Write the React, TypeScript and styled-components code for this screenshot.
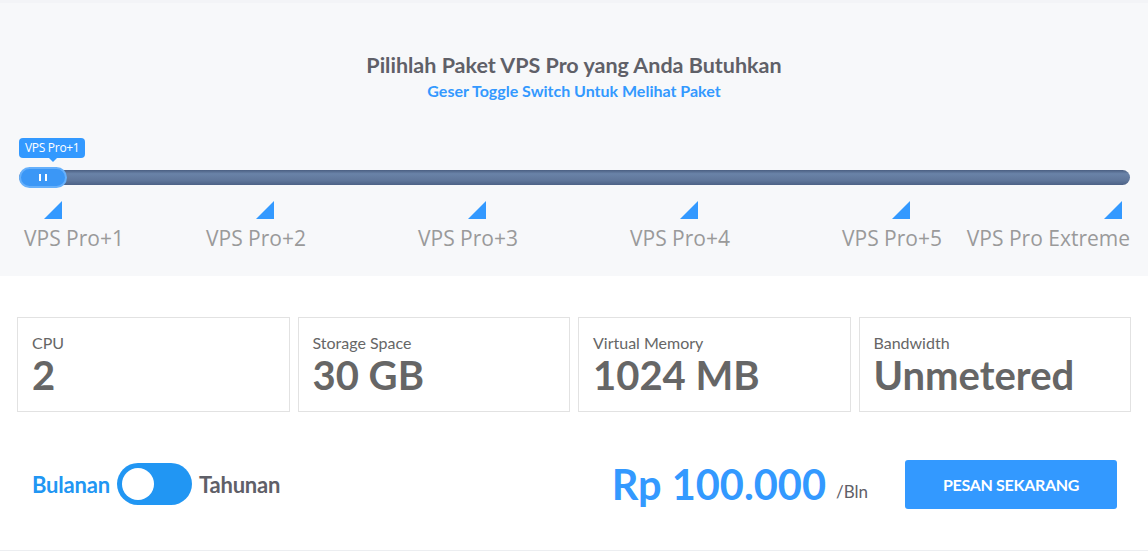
import styled, { createGlobalStyle } from 'styled-components';

const GlobalStyle = createGlobalStyle`
  body {
    margin: 0;
    background: #fff;
    font-family: Lato, "Open Sans", sans-serif;
  }
`;

const blue = '#3399ff';

const Hero = styled.section`
  background: #f7f8fa;
  height: 276px;
  padding-top: 49px;
  box-sizing: border-box;
  border-top: 3px solid #f3f4f7;
`;

const Title = styled.h2`
  margin: 0;
  text-align: center;
  font-family: Lato, sans-serif;
  font-size: 21.5px;
  font-weight: 700;
  color: #5f6068;
  line-height: 26px;
`;

const Subtitle = styled.p`
  margin: 3px 0 0;
  text-align: center;
  font-family: Lato, sans-serif;
  font-size: 16px;
  font-weight: 700;
  color: ${blue};
  line-height: 20px;
`;

const SliderWrap = styled.div`
  position: relative;
  margin: 69px 18px 0 19px;
  height: 15px;
`;

const Track = styled.div`
  height: 15px;
  border-radius: 8px;
  background: linear-gradient(to bottom, #4a5f82 0, #6a83a8 25%, #5f769a 70%, #4d6286 100%);
`;

const Handle = styled.div`
  position: absolute;
  left: 0;
  top: -3px;
  width: 48px;
  height: 21px;
  box-sizing: border-box;
  border-radius: 11px;
  background: #3b97f6;
  border: 2px solid #66b0fb;
  display: flex;
  align-items: center;
  justify-content: center;
  gap: 4px;
`;

const Grip = styled.span`
  width: 2px;
  height: 7px;
  background: #fff;
`;

const Bubble = styled.div`
  position: absolute;
  left: 0;
  top: -32px;
  height: 20px;
  padding: 0 6px;
  border-radius: 4px;
  background: ${blue};
  color: #fff;
  font-family: "Open Sans", sans-serif;
  font-size: 12px;
  letter-spacing: -0.3px;
  line-height: 20px;
  white-space: nowrap;

  &::after {
    content: '';
    position: absolute;
    left: 30px;
    bottom: -4px;
    border-left: 4px solid transparent;
    border-right: 4px solid transparent;
    border-top: 4px solid ${blue};
  }
`;

const Ticks = styled.div`
  display: flex;
  gap: 194px;
  padding-left: 44px;
  margin-top: 16px;
`;

const Tick = styled.span`
  width: 0;
  height: 0;
  border-left: 18px solid transparent;
  border-bottom: 18px solid ${blue};
`;

const Labels = styled.div`
  display: grid;
  grid-template-columns: 126px repeat(4, 212px) 1fr;
  padding: 0 18px 0 24px;
  margin-top: 6px;
`;

const Label = styled.span<{ $align: string }>`
  display: flex;
  justify-content: ${(p) => p.$align};
  min-width: 0;
  font-family: "Open Sans", sans-serif;
  font-size: 21px;
  color: #9a9a9a;
  line-height: 26px;
  white-space: nowrap;
`;

const Details = styled.section`
  padding: 41px 17px 0;
  height: 275px;
  box-sizing: border-box;
  border-bottom: 1px solid #eceef1;
`;

const Specs = styled.div`
  display: grid;
  grid-template-columns: repeat(4, 1fr);
  gap: 8px;
`;

const Spec = styled.div`
  height: 95px;
  box-sizing: border-box;
  border: 1px solid #e2e2e2;
  padding: 15px 14px 0;
  color: #666;
`;

const SpecName = styled.div`
  font-family: Lato, sans-serif;
  font-size: 16px;
  line-height: 20px;
`;

const SpecValue = styled.div`
  font-family: Lato, sans-serif;
  font-size: 40px;
  font-weight: 700;
  line-height: 44px;
`;

const Order = styled.div`
  display: flex;
  align-items: center;
  justify-content: space-between;
  margin-top: 47px;
  padding: 0 14px 0 15px;
`;

const Period = styled.div`
  display: flex;
  align-items: center;
  gap: 7px;
`;

const PeriodName = styled.span<{ $active?: boolean }>`
  font-family: Lato, sans-serif;
  font-size: 22px;
  font-weight: 700;
  letter-spacing: -0.2px;
  color: ${(p) => (p.$active ? '#2196f3' : '#5f6068')};
`;

const Switch = styled.button`
  width: 75px;
  height: 42px;
  border: 0;
  border-radius: 21px;
  background: #2196f3;
  padding: 0 5px;
  display: flex;
  align-items: center;
`;

const Knob = styled.span`
  width: 32px;
  height: 32px;
  border-radius: 50%;
  background: #fff;
`;

const Checkout = styled.div`
  display: flex;
  align-items: center;
`;

const Price = styled.span`
  font-family: Lato, sans-serif;
  font-size: 41.5px;
  font-weight: 700;
  color: ${blue};
`;

const Per = styled.span`
  font-family: Lato, sans-serif;
  font-size: 17px;
  color: #5f6068;
  margin: 14px 37px 0 10px;
`;

const OrderButton = styled.button`
  width: 212px;
  height: 49px;
  border: 0;
  border-radius: 3px;
  background: ${blue};
  color: #fff;
  font-family: Lato, sans-serif;
  font-size: 16px;
  font-weight: 700;
  letter-spacing: -0.3px;
`;

const plans = ['VPS Pro+1', 'VPS Pro+2', 'VPS Pro+3', 'VPS Pro+4', 'VPS Pro+5', 'VPS Pro Extreme'];

const specs = [
  { name: 'CPU', value: '2' },
  { name: 'Storage Space', value: '30 GB' },
  { name: 'Virtual Memory', value: '1024 MB' },
  { name: 'Bandwidth', value: 'Unmetered' },
];

export default function App() {
  return (
    <>
      <GlobalStyle />
      <Hero>
        <Title>Pilihlah Paket VPS Pro yang Anda Butuhkan</Title>
        <Subtitle>Geser Toggle Switch Untuk Melihat Paket</Subtitle>
        <SliderWrap>
          <Track />
          <Bubble>VPS Pro+1</Bubble>
          <Handle>
            <Grip />
            <Grip />
          </Handle>
        </SliderWrap>
        <Ticks>
          {plans.map((p) => (
            <Tick key={p} />
          ))}
        </Ticks>
        <Labels>
          {plans.map((p, i) => (
            <Label
              key={p}
              $align={i === 0 ? 'flex-start' : i === plans.length - 1 ? 'flex-end' : 'center'}
            >
              {p}
            </Label>
          ))}
        </Labels>
      </Hero>
      <Details>
        <Specs>
          {specs.map((s) => (
            <Spec key={s.name}>
              <SpecName>{s.name}</SpecName>
              <SpecValue>{s.value}</SpecValue>
            </Spec>
          ))}
        </Specs>
        <Order>
          <Period>
            <PeriodName $active>Bulanan</PeriodName>
            <Switch>
              <Knob />
            </Switch>
            <PeriodName>Tahunan</PeriodName>
          </Period>
          <Checkout>
            <Price>Rp 100.000</Price>
            <Per>/Bln</Per>
            <OrderButton>PESAN SEKARANG</OrderButton>
          </Checkout>
        </Order>
      </Details>
    </>
  );
}
